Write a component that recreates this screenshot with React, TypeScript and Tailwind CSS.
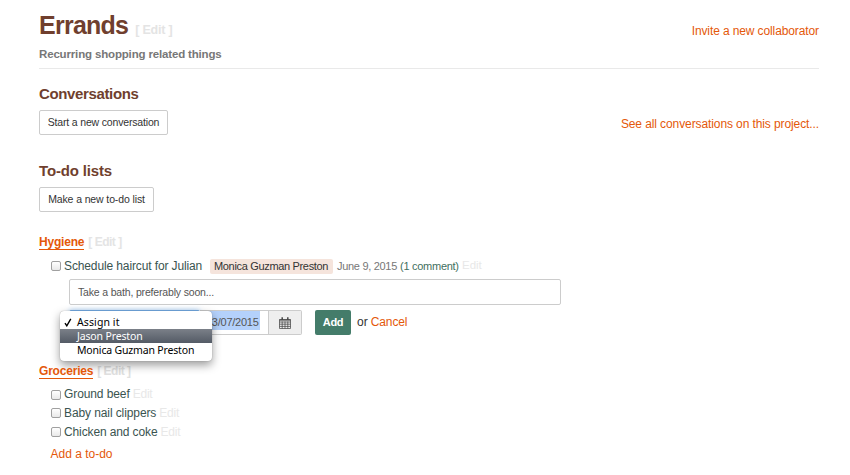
import React from "react";

const link = "text-[#e4580a]";

function TodoItem({ name, track, pad }: { name: string; track: string; pad: string }) {
  return (
    <li className={`flex items-center pl-[12px] ${pad}`}>
      <Checkbox offset="mt-px" />
      <span className={`ml-[3px] text-[12px] text-[#3a5450] ${track}`}>{name}</span>
      <span className="ml-[3px] text-[12px] tracking-[-0.2px] text-[#e8e8e8]">Edit</span>
    </li>
  );
}

function Checkbox({ offset }: { offset: string }) {
  return (
    <span className={`h-[10px] w-[10px] shrink-0 rounded-[2px] border border-[#a0a0a0] bg-gradient-to-b from-white to-[#e9e9e9] ${offset}`} />
  );
}

function CalendarIcon() {
  return (
    <svg width="12" height="12" viewBox="0 0 12 12" fill="none" stroke="#484848">
      <path d="M0.5 2.5h11v9h-11zM0.5 5h11M0.5 7.2h11M0.5 9.4h11M3.2 4.5v7M6 4.5v7M8.8 4.5v7" strokeWidth="0.75" />
      <path d="M0.5 3h11" strokeWidth="1.2" />
      <path d="M3.2 0.3v2.8M8.8 0.3v2.8" strokeWidth="1.5" />
    </svg>
  );
}

export default function App() {
  return (
    <div className="h-[475px] w-[850px] overflow-hidden whitespace-nowrap bg-white pl-[39px] pr-[31px] font-['Liberation_Sans',Arial,sans-serif] text-[#333]">
      <header className="flex h-[69px] justify-between border-b border-[#e9e9e9] pt-[9px]">
        <div>
          <h1 className="flex h-[32px] items-baseline text-[25px] font-bold leading-[32px] tracking-[-0.75px] text-[#703f2e]">
            Errands
            <span className="ml-[7px] text-[12.5px] tracking-[-0.2px] text-[#e4e4e4]">[ Edit ]</span>
          </h1>
          <p className="mt-[3px] text-[11.5px] font-bold leading-[20px] tracking-[-0.16px] text-[#777]">
            Recurring shopping related things
          </p>
        </div>
        <a className={`pt-[12px] text-[12px] leading-[20px] tracking-[-0.11px] ${link}`}>Invite a new collaborator</a>
      </header>

      <section className="h-[92px] pt-[15px]">
        <h2 className="text-[15px] font-bold leading-[20px] tracking-[-0.36px] text-[#703f2e]">Conversations</h2>
        <div className="mt-[6px] flex items-center justify-between">
          <button className="h-[25px] w-[129px] rounded-[2px] border border-[#ccc] text-[10.5px] leading-[23px] tracking-[-0.17px]">
            Start a new conversation
          </button>
          <a className={`mt-[3px] text-[12px] leading-[20px] tracking-[-0.1px] ${link}`}>See all conversations on this project...</a>
        </div>
      </section>

      <section className="h-[71px]">
        <h2 className="text-[15px] font-bold leading-[20px] tracking-[-0.15px] text-[#703f2e]">To-do lists</h2>
        <button className="mt-[6px] block h-[25px] w-[115px] rounded-[2px] border border-[#ccc] text-[10.5px] leading-[23px] tracking-[-0.12px]">
          Make a new to-do list
        </button>
      </section>

      <section className="h-[129px]">
        <h3 className="flex h-[20px] items-center text-[12px] font-bold">
          <a className="h-[16px] border-b border-[#e4580a] leading-[16px] tracking-[-0.2px] text-[#e4580a]">Hygiene</a>
          <span className="ml-[4px] tracking-[-0.5px] text-[#e4e4e4]">[ Edit ]</span>
        </h3>
        <div className="mt-[4px] flex h-[20px] items-center pl-[12px]">
          <Checkbox offset="mt-0" />
          <span className="ml-[3px] w-[138px] text-[12px] tracking-[-0.12px] text-[#3a5450]">Schedule haircut for Julian</span>
          <span className="ml-[8px] h-[15px] w-[123px] rounded-[2px] bg-[#f5e4dc] pl-[4px] text-[11px] leading-[15px] tracking-[-0.33px]">Monica Guzman Preston</span>
          <span className="ml-[4px] w-[60px] text-[11px] tracking-[-0.3px] text-[#777]">June 9, 2015</span>
          <span className="ml-[3px] w-[59px] text-[11px] tracking-[-0.27px] text-[#3f6f60]">(1 comment)</span>
          <span className="ml-[3px] text-[11.5px] text-[#e8e8e8]">Edit</span>
        </div>
        <div className="ml-[30px] mt-[3px] h-[26px] w-[492px] rounded-[2px] border border-[#ccc] pl-[8px] text-[10.5px] leading-[24px] tracking-[-0.17px] text-[#555]">
          Take a bath, preferably soon...
        </div>
        <div className="relative mt-[5px] flex h-[25px] pl-[30px]">
          <div className="w-[131px] rounded-[2px] border border-[#75aee8] shadow-[0_0_5px_rgba(100,170,240,0.6)]" />
          <div className="flex w-[102px] rounded-r-[2px] border border-l-0 border-[#ccc]">
            <span className="h-[19px] w-[60px] bg-[#b4d1fb] pl-[6px] text-[11px] leading-[22px] tracking-[-0.25px] text-[#555]">03/07/2015</span>
            <span className="ml-auto flex w-[33px] items-center justify-center border-l border-[#ccc] bg-[#eee]"><CalendarIcon /></span>
          </div>
          <button className="ml-[13px] w-[36px] rounded-[2px] bg-[#447c6a] text-[11px] font-bold leading-[25px] tracking-[-0.3px] text-white">Add</button>
          <span className="ml-[6px] text-[12px] leading-[24px]">or</span>
          <a className={`ml-[3px] text-[12px] leading-[24px] tracking-[-0.1px] ${link}`}>Cancel</a>
          <ul className="absolute left-[21px] top-[1px] h-[50px] w-[152px] rounded-[4px] bg-white pt-[4px] font-['Noto_Sans',sans-serif] text-[10.5px] leading-[14px] text-black shadow-[0_4px_10px_rgba(0,0,0,0.4),0_0_1px_rgba(0,0,0,0.4)]">
            <li className="flex h-[14px] items-center pl-[4px]">
              <svg width="8" height="9" viewBox="0 0 8 9" fill="none" stroke="#000" strokeWidth="1.4"><path d="M1 5.2 2.8 7.8 6.8 0.8" /></svg>
              <span className="ml-[5px] tracking-[0.1px]">Assign it</span>
            </li>
            <li className="h-[14px] bg-gradient-to-b from-[#7b8088] to-[#545b66] pl-[17px] tracking-[-0.15px] text-white">Jason Preston</li>
            <li className="h-[14px] pl-[17px] tracking-[-0.17px]">Monica Guzman Preston</li>
          </ul>
        </div>
      </section>

      <section>
        <h3 className="flex h-[20px] items-center text-[12px] font-bold">
          <a className="relative h-[16px] border-b border-[#e4580a] leading-[16px] tracking-[-0.2px] text-[#e4580a]">Groceries</a>
          <span className="ml-[4px] tracking-[-0.5px] text-[#e0e0e0]">[ Edit ]</span>
        </h3>
        <ul className="pt-[4px]">
          <TodoItem name="Ground beef" track="tracking-[-0.1px]" pad="h-[18px]" />
          <TodoItem name="Baby nail clippers" track="tracking-[-0.1px]" pad="h-[19px]" />
          <TodoItem name="Chicken and coke" track="tracking-[-0.12px]" pad="h-[19px]" />
        </ul>
        <a className={`ml-[11.5px] mt-[3px] block text-[12px] leading-[20px] ${link}`}>Add a to-do</a>
      </section>
    </div>
  );
}
